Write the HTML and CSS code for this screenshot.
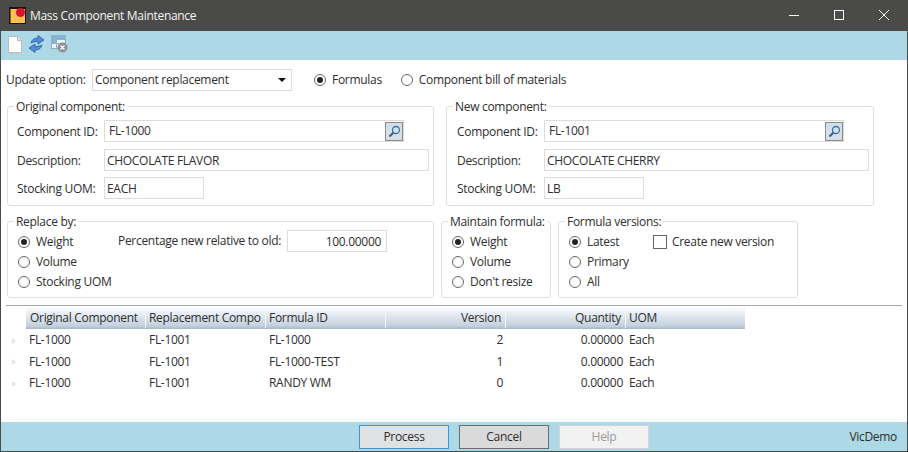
FILE: index.html
```html
<!DOCTYPE html>
<html lang="en">
<head>
<meta charset="utf-8">
<title>Mass Component Maintenance</title>
<link rel="stylesheet" href="styles.css">
</head>
<body>
<div class="window">
  <header class="titlebar">
    <svg class="logo" width="17" height="17" viewBox="0 0 17 17"><rect width="17" height="17" fill="#1c1410"/><rect x="1.5" y="2" width="14.500" height="14" fill="#fbc04e"/><circle cx="11.500" cy="5.500" r="4.500" fill="#d3152f"/></svg>
    <span class="title">Mass Component Maintenance</span>
    <div class="winbtns">
      <svg width="10" height="10" viewBox="0 0 10 10"><path d="M0 5.500H10" stroke="#fff"/></svg>
      <svg width="10" height="10" viewBox="0 0 10 10"><rect x=".5" y=".5" width="9" height="9" fill="none" stroke="#fff"/></svg>
      <svg width="10" height="10" viewBox="0 0 10 10"><path d="M0 0L10 10M10 0L0 10" stroke="#fff"/></svg>
    </div>
  </header>
  <div class="toolbar">
    <svg width="14" height="17" viewBox="0 0 14 17"><path d="M.5.500H9.500L13.500 4.500V16.500H.5Z" fill="#fdfdfb" stroke="#b9bdbd"/><path d="M9.500.500V4.500H13.500" fill="#e8e8e4" stroke="#b9bdbd"/></svg>
    <svg width="17" height="18" viewBox="0 0 17 18"><path d="M3 8C4 4 7 3 10 3V0.500L16 5L10 9V6.500C7 6.500 5 7 3 8Z" fill="#4f8fdc" stroke="#23589f" stroke-width=".8"/><path d="M14 10C13 14 10 15 7 15V17.500L1 13L7 9V11.500C10 11.500 12 11 14 10Z" fill="#4f8fdc" stroke="#23589f" stroke-width=".8"/></svg>
    <svg width="17" height="18" viewBox="0 0 17 18"><rect x=".5" y=".5" width="14" height="13" fill="#eef5f8" stroke="#8fb3c6"/><path d="M.5 4.500H14.500M.5 8.500H14.500M5.500 .5V13.500" stroke="#8fb3c6"/><rect x="1" y="1" width="13" height="3" fill="#7fb6d6"/><rect x="1" y="5" width="4" height="3" fill="#7fb6d6"/><circle cx="11.500" cy="12.500" r="5" fill="#8c8f94"/><path d="M9.500 10.500L13.500 14.500M13.500 10.500L9.500 14.500" stroke="#fff" stroke-width="1.300"/></svg>
  </div>
  <main class="content">
    <div class="option-row">
      <span class="option-label">Update option:</span>
      <div class="select"><span>Component replacement</span><i class="caret"></i></div>
      <label class="radio formulas"><i class="dot on"></i>Formulas</label>
      <label class="radio"><i class="dot"></i>Component bill of materials</label>
    </div>
    <div class="components">
      <section class="group comp">
        <span class="legend">Original component:</span>
        <div class="field"><span class="flabel">Component ID:</span><div class="input idbox"><span>FL-1000</span><button class="search"><svg width="13" height="13" viewBox="0 0 13 13"><circle cx="8" cy="5" r="3.500" fill="#cfe4fa" stroke="#3f6fa8" stroke-width="1.300"/><path d="M5.500 7.500L1.500 11.500" stroke="#47586e" stroke-width="2"/></svg></button></div></div>
        <div class="field"><span class="flabel">Description:</span><div class="input wide"><span>CHOCOLATE FLAVOR</span></div></div>
        <div class="field"><span class="flabel">Stocking UOM:</span><div class="input short"><span>EACH</span></div></div>
      </section>
      <section class="group comp">
        <span class="legend">New component:</span>
        <div class="field"><span class="flabel">Component ID:</span><div class="input idbox"><span>FL-1001</span><button class="search"><svg width="13" height="13" viewBox="0 0 13 13"><circle cx="8" cy="5" r="3.500" fill="#cfe4fa" stroke="#3f6fa8" stroke-width="1.300"/><path d="M5.500 7.500L1.500 11.500" stroke="#47586e" stroke-width="2"/></svg></button></div></div>
        <div class="field"><span class="flabel">Description:</span><div class="input wide"><span>CHOCOLATE CHERRY</span></div></div>
        <div class="field"><span class="flabel">Stocking UOM:</span><div class="input short"><span>LB</span></div></div>
      </section>
    </div>
    <div class="options">
      <section class="group replace">
        <span class="legend">Replace by:</span>
        <div class="stack">
          <label class="radio"><i class="dot on"></i>Weight</label>
          <label class="radio"><i class="dot"></i>Volume</label>
          <label class="radio"><i class="dot"></i>Stocking UOM</label>
        </div>
        <div class="percent"><span>Percentage new relative to old:</span><div class="input short num"><span>100.00000</span></div></div>
      </section>
      <section class="group maintain">
        <span class="legend">Maintain formula:</span>
        <div class="stack">
          <label class="radio"><i class="dot on"></i>Weight</label>
          <label class="radio"><i class="dot"></i>Volume</label>
          <label class="radio"><i class="dot"></i>Don't resize</label>
        </div>
      </section>
      <section class="group versions">
        <span class="legend">Formula versions:</span>
        <div class="stack">
          <label class="radio"><i class="dot on"></i>Latest</label>
          <label class="radio"><i class="dot"></i>Primary</label>
          <label class="radio"><i class="dot"></i>All</label>
        </div>
        <label class="check"><i class="box"></i>Create new version</label>
      </section>
    </div>
    <hr class="rule">
    <div class="table">
      <div class="thead">
        <span>Original Component</span><span>Replacement Compo</span><span>Formula ID</span><span class="r">Version</span><span class="r">Quantity</span><span>UOM</span>
      </div>
      <div class="trow"><i class="arrow"></i><span>FL-1000</span><span>FL-1001</span><span>FL-1000</span><span class="r">2</span><span class="r">0.00000</span><span>Each</span></div>
      <div class="trow"><i class="arrow"></i><span>FL-1000</span><span>FL-1001</span><span>FL-1000-TEST</span><span class="r">1</span><span class="r">0.00000</span><span>Each</span></div>
      <div class="trow"><i class="arrow"></i><span>FL-1000</span><span>FL-1001</span><span>RANDY WM</span><span class="r">0</span><span class="r">0.00000</span><span>Each</span></div>
    </div>
  </main>
  <footer class="footer">
    <div class="btn primary">Process</div>
    <div class="btn cancel">Cancel</div>
    <div class="btn disabled">Help</div>
    <span class="user">VicDemo</span>
  </footer>
</div>
</body>
</html>
```
FILE: styles.css
```css
* { box-sizing: border-box; }
html, body { margin: 0; padding: 0; }
body { width: 908px; height: 452px; overflow: hidden; background: #fff; font: 12px/16px "Open Sans", "Noto Sans", sans-serif; color: #2e2e2e; letter-spacing: -0.3px; }
.window { width: 908px; height: 452px; display: flex; flex-direction: column; border: 1px solid #4a4a48; border-width: 0 1px 1px 1px; }
.titlebar { height: 31px; flex: none; margin: 0 -1px; background: #4a4a48; display: flex; align-items: center; padding-left: 9px; color: #f4f4f4; }
.logo { flex: none; margin-top: -1px; }
.title { margin-left: 4px; }
.winbtns { margin-left: auto; display: flex; gap: 35px; padding-right: 19px; margin-top: -1px; }
.winbtns svg { display: block; width: 10px; height: 10px; }
.toolbar { height: 29px; flex: none; background: #add8e6; display: flex; align-items: center; gap: 6px; padding: 0 0 3px 7px; }
.content { flex: 1; padding: 0 5px; min-height: 0; }
.option-row { display: flex; align-items: center; height: 22px; margin-top: 9px; }
.option-label { width: 86px; flex: none; }
.select { width: 200px; height: 22px; flex: none; border: 1px solid #dcdcdc; padding: 0 2px; display: flex; align-items: center; justify-content: space-between; }
.caret { border: 4px solid transparent; border-top: 4px solid #111; border-bottom: 0; margin-right: 3px; }
.radio { display: flex; align-items: center; gap: 6px; height: 20px; white-space: nowrap; }
.formulas { margin: 0 19px 0 22px; }
.dot { width: 12px; height: 12px; border: 1px solid #666; border-radius: 50%; background: #fff; flex: none; display: flex; align-items: center; justify-content: center; }
.dot.on::after { content: ""; width: 6px; height: 6px; background: #222; border-radius: 50%; }
.components { display: flex; gap: 12px; margin-top: 15px; margin-left: 1px; }
.group { position: relative; border: 1px solid #dfdfdf; border-radius: 3px; background: #fff; }
.legend { position: absolute; top: -8px; left: 6px; background: #fff; padding: 0 2px; line-height: 16px; white-space: nowrap; }
.comp { width: 427px; height: 100px; padding: 13px 0 0 9px; display: flex; flex-direction: column; gap: 6px; }
.comp + .comp { width: 428px; padding-left: 10px; }
.field { display: flex; align-items: center; height: 22px; }
.field + .field { margin-top: 1px; }
.field + .field + .field { margin-top: 0; }
.flabel { width: 87px; flex: none; margin-top: 2px; }
.input { height: 22px; border: 1px solid #dcdcdc; background: #fff; display: flex; align-items: center; padding: 1px 2px 0; white-space: nowrap; flex: none; }
.idbox { width: 300px; justify-content: space-between; padding: 0; }
.idbox > span { padding-left: 4px; }
.wide { width: 325px; }
.short { width: 100px; }
.num { justify-content: flex-end; padding-right: 5px; }
.search { width: 18px; height: 19px; padding: 0; border: 1px solid #8a8a8a; background: #d5dfe8; display: flex; align-items: center; justify-content: center; }
.search svg { display: block; }
.options { display: flex; gap: 7px; margin-top: 15px; margin-left: 1px; height: 77px; }
.stack { display: flex; flex-direction: column; flex: none; }
.replace { width: 427px; padding: 10px 0 0 10px; display: flex; }
.replace .stack { width: 100px; }
.percent { display: flex; align-items: center; height: 22px; margin-top: -2px; }
.percent > span { width: 169px; flex: none; }
.maintain { width: 110px; padding: 10px 0 0 10px; }
.versions { width: 240px; padding: 10px 0 0 10px; display: flex; }
.versions .stack { width: 84px; }
.check { display: flex; align-items: center; gap: 5px; height: 20px; white-space: nowrap; }
.box { width: 14px; height: 14px; border: 1px solid #666; flex: none; }
.rule { border: 0; border-top: 1px solid #a8a8a8; margin: 7px 0 0; height: 0; width: 896px; }
.table { margin-top: 2px; margin-left: 20px; width: 720px; }
.thead, .trow { display: grid; grid-template-columns: repeat(6, 120px); }
.thead { height: 21px; margin-right: 1px; background: linear-gradient(#f7f9fb 0, #e6ecf2 30%, #c3d0de 85%, #a7b7c7 100%); align-items: center; }
.thead span { padding: 0 4px 0 3px; border-right: 1px solid #f3f5f7; white-space: nowrap; overflow: hidden; height: 18px; }
.thead span:first-child { padding-left: 4px; }
.thead span:last-child { border-right: 0; }
.r { text-align: right; }
.trow { height: 21.500px; align-items: center; position: relative; }
.trow span { padding: 0 3px; white-space: nowrap; }
.thead + .trow { margin-top: 0.500px; }
.arrow { position: absolute; left: -14px; top: 8px; border: 3px solid transparent; border-left: 4px solid #e4e4e4; border-right: 0; }
.footer { height: 29px; flex: none; background: #add8e6; display: flex; align-items: flex-start; gap: 10px; padding: 3px 0 0 358px; position: relative; }
.btn { width: 90px; height: 24px; display: flex; align-items: center; justify-content: center; border: 1px solid #707070; background: #dedede; }
.primary { border-color: #3f93d8; background: #dfe1e2; }
.cancel { border-color: #6c6c6c; background: #dadada; }
.disabled { border-color: #cfd5d8; background: #f2f2f2; color: #9a9a9a; }
.user { margin-left: auto; padding-right: 10px; margin-top: 4px; }
```
